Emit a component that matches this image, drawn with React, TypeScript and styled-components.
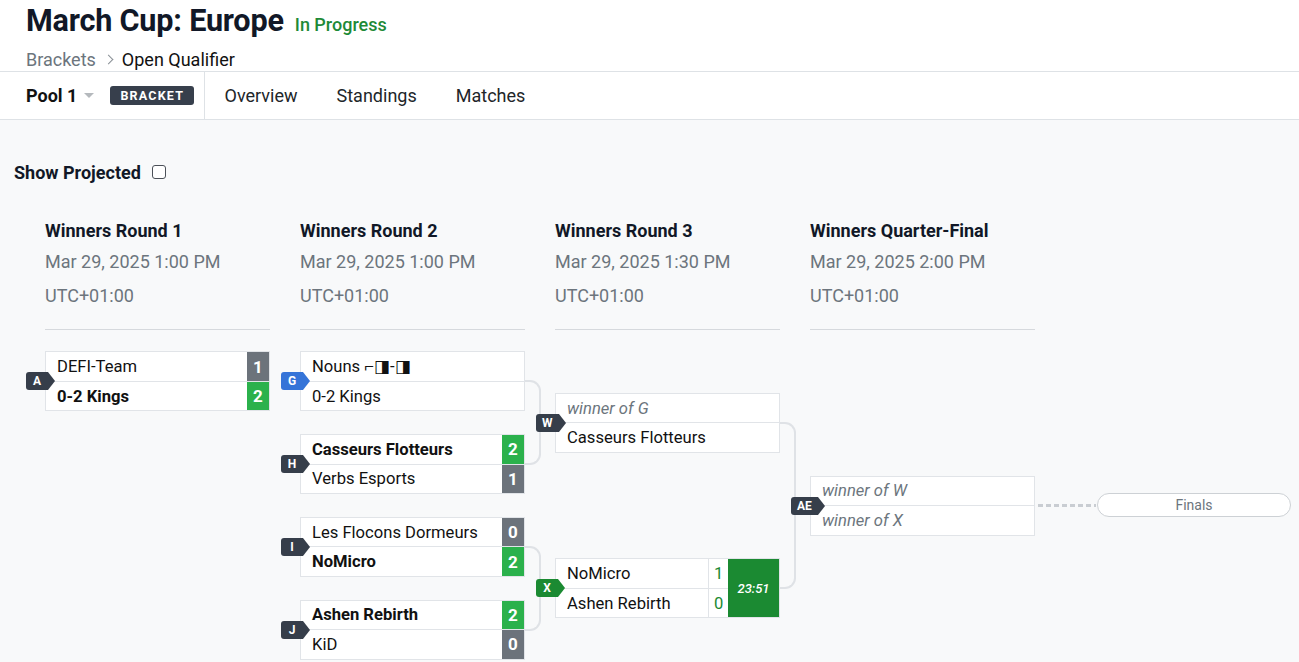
import React from 'react';
import styled, { createGlobalStyle } from 'styled-components';

const GlobalStyle = createGlobalStyle`
  html, body { margin: 0; padding: 0; }
  body {
    font-family: Roboto, "Liberation Sans", Arial, sans-serif;
    background: #f8f9fa;
    color: #111;
  }
  *, *::before, *::after { box-sizing: border-box; }
`;

type Team = { name: string; score?: number; win?: boolean; placeholder?: boolean };
type Tone = 'dark' | 'blue' | 'green';
type MatchT = {
  id: string;
  tone: Tone;
  teams: [Team, Team];
  live?: { scores: [number, number]; time: string };
};
type Round = {
  title: string;
  date: string;
  slotH: number;
  connect: boolean;
  finals?: boolean;
  slots: (MatchT | null)[];
};

const SLOT = 82.75;

const rounds: Round[] = [
  {
    title: 'Winners Round 1',
    date: 'Mar 29, 2025 1:00 PM',
    slotH: SLOT,
    connect: false,
    slots: [
      {
        id: 'A',
        tone: 'dark',
        teams: [
          { name: 'DEFI-Team', score: 1 },
          { name: '0-2 Kings', score: 2, win: true },
        ],
      },
    ],
  },
  {
    title: 'Winners Round 2',
    date: 'Mar 29, 2025 1:00 PM',
    slotH: SLOT,
    connect: true,
    slots: [
      {
        id: 'G',
        tone: 'blue',
        teams: [{ name: 'Nouns ⌐◨-◨' }, { name: '0-2 Kings' }],
      },
      {
        id: 'H',
        tone: 'dark',
        teams: [
          { name: 'Casseurs Flotteurs', score: 2, win: true },
          { name: 'Verbs Esports', score: 1 },
        ],
      },
      {
        id: 'I',
        tone: 'dark',
        teams: [
          { name: 'Les Flocons Dormeurs', score: 0 },
          { name: 'NoMicro', score: 2, win: true },
        ],
      },
      {
        id: 'J',
        tone: 'dark',
        teams: [
          { name: 'Ashen Rebirth', score: 2, win: true },
          { name: 'KiD', score: 0 },
        ],
      },
    ],
  },
  {
    title: 'Winners Round 3',
    date: 'Mar 29, 2025 1:30 PM',
    slotH: SLOT * 2,
    connect: true,
    slots: [
      {
        id: 'W',
        tone: 'dark',
        teams: [{ name: 'winner of G', placeholder: true }, { name: 'Casseurs Flotteurs' }],
      },
      {
        id: 'X',
        tone: 'green',
        teams: [{ name: 'NoMicro' }, { name: 'Ashen Rebirth' }],
        live: { scores: [1, 0], time: '23:51' },
      },
    ],
  },
  {
    title: 'Winners Quarter-Final',
    date: 'Mar 29, 2025 2:00 PM',
    slotH: SLOT * 4,
    connect: false,
    finals: true,
    slots: [
      {
        id: 'AE',
        tone: 'dark',
        teams: [
          { name: 'winner of W', placeholder: true },
          { name: 'winner of X', placeholder: true },
        ],
      },
    ],
  },
];

/* ---------- header ---------- */

const Header = styled.header`
  background: #fff;
`;

const TitleRow = styled.div`
  display: flex;
  align-items: baseline;
  padding: 3px 26px 0;
  height: 39px;
`;

const Title = styled.h1`
  margin: 0;
  font-size: 30.6px;
  line-height: 36px;
  font-weight: 700;
  color: #111827;
  letter-spacing: -0.2px;
`;

const Status = styled.span`
  margin-left: 11px;
  font-size: 18px;
  font-weight: 500;
  color: #1e8a37;
`;

const Crumbs = styled.nav`
  display: flex;
  align-items: center;
  margin-top: 8px;
  padding: 0 26px;
  height: 24px;
  font-size: 18px;
`;

const CrumbLink = styled.span`
  color: #6c757d;
`;

const CrumbSep = styled.span`
  width: 7px;
  height: 7px;
  margin: 0 10px 0 9px;
  border-top: 1.5px solid #8a9096;
  border-right: 1.5px solid #8a9096;
  transform: rotate(45deg);
`;

const CrumbCurrent = styled.span`
  color: #111;
`;

const TabBar = styled.div`
  display: flex;
  height: 49px;
  border-top: 1px solid #dee2e6;
  border-bottom: 1px solid #dee2e6;
`;

const PoolPicker = styled.div`
  display: flex;
  align-items: center;
  padding: 0 10px 0 26px;
  border-right: 1px solid #dee2e6;
`;

const PoolName = styled.span`
  font-size: 18px;
  font-weight: 700;
  color: #111;
`;

const Caret = styled.span`
  margin-left: 7px;
  width: 0;
  height: 0;
  border-left: 5px solid transparent;
  border-right: 5px solid transparent;
  border-top: 5px solid #b5b9bd;
`;

const ViewBadge = styled.span`
  margin-left: 16px;
  height: 19px;
  padding: 0 10px;
  display: inline-flex;
  align-items: center;
  border-radius: 3px;
  background: #373f4c;
  color: #fff;
  font-size: 12.5px;
  font-weight: 700;
  letter-spacing: 1.2px;
`;

const Tab = styled.span`
  display: flex;
  align-items: center;
  padding: 0 19.5px;
  font-size: 18px;
  color: #212529;
`;

/* ---------- content ---------- */

const Content = styled.main`
  padding: 40px 14px 0;
`;

const ToggleRow = styled.label`
  display: flex;
  align-items: center;
  height: 24px;
  font-size: 18px;
  font-weight: 700;
  color: #111827;
`;

const Check = styled.input`
  appearance: none;
  margin: 0 0 0 11px;
  width: 14px;
  height: 14px;
  border: 1.5px solid #4b5058;
  border-radius: 3px;
  background: #fff;
`;

const Bracket = styled.div`
  display: flex;
  margin: 35px 0 0 31px;
`;

const RoundCol = styled.section<{ $last?: boolean }>`
  display: flex;
  flex-direction: column;
  width: ${(p) => (p.$last ? 'auto' : '225px')};
  margin-right: ${(p) => (p.$last ? '0' : '30px')};
`;

const RoundHead = styled.div`
  width: 225px;
  padding-bottom: 16px;
  border-bottom: 1px solid #d6d9dd;
`;

const RoundTitle = styled.div`
  font-size: 18px;
  line-height: 24px;
  font-weight: 700;
  color: #111827;
  margin-bottom: 2px;
`;

const RoundMeta = styled.div`
  font-size: 18px;
  line-height: 34px;
  color: #6c757d;
`;

const RoundBody = styled.div`
  margin-top: 10px;
  display: flex;
  flex-direction: column;
`;

const Pair = styled.div<{ $slot: number }>`
  position: relative;
  display: flex;
  flex-direction: column;
  &::after {
    content: '';
    position: absolute;
    left: 221px;
    top: ${(p) => p.$slot / 2 - 1}px;
    height: ${(p) => p.$slot + 2}px;
    width: 20px;
    border: 2px solid #dfe2e6;
    border-left: 0;
    border-radius: 0 11px 11px 0;
    z-index: 0;
  }
`;

const Slot = styled.div<{ $h: number }>`
  height: ${(p) => p.$h}px;
  display: flex;
  align-items: center;
`;

const MatchBox = styled.div`
  position: relative;
  z-index: 1;
  flex: none;
  width: 225px;
  height: 60px;
  display: flex;
  background: #fff;
  border: 1px solid #e1e4e8;
`;

const toneColor: Record<Tone, string> = {
  dark: '#363e4a',
  blue: '#3574d8',
  green: '#1b8a32',
};

const Badge = styled.span<{ $tone: Tone }>`
  position: absolute;
  left: -20px;
  top: 50%;
  margin-top: -9px;
  height: 18px;
  min-width: 22px;
  padding: 0 6px;
  display: flex;
  align-items: center;
  justify-content: center;
  border-radius: 3px 0 0 3px;
  background: ${(p) => toneColor[p.$tone]};
  color: #fff;
  font-size: 12px;
  font-weight: 700;
  z-index: 2;
  &::after {
    content: '';
    position: absolute;
    left: 100%;
    top: 0;
    border-top: 9px solid transparent;
    border-bottom: 9px solid transparent;
    border-left: 7px solid ${(p) => toneColor[p.$tone]};
  }
`;

const Rows = styled.div`
  flex: 1;
  display: flex;
  flex-direction: column;
  min-width: 0;
`;

const TeamRow = styled.div`
  flex: 1;
  display: flex;
  align-items: stretch;
  &:first-child {
    border-bottom: 1px solid #e1e4e8;
  }
`;

const TeamName = styled.span<{ $win?: boolean; $ph?: boolean }>`
  flex: 1;
  display: flex;
  align-items: center;
  padding-left: 11px;
  font-size: 16.6px;
  white-space: nowrap;
  color: ${(p) => (p.$ph ? '#6c757d' : '#111')};
  font-weight: ${(p) => (p.$win ? 700 : 400)};
  font-style: ${(p) => (p.$ph ? 'italic' : 'normal')};
`;

const Score = styled.span<{ $win?: boolean }>`
  width: 22px;
  display: flex;
  align-items: center;
  justify-content: center;
  font-size: 17px;
  font-weight: 700;
  color: #fff;
  background: ${(p) => (p.$win ? '#2bb14c' : '#6c737b')};
`;

const LiveCol = styled.div`
  width: 20px;
  display: flex;
  flex-direction: column;
  border-left: 1px solid #e1e4e8;
`;

const LiveScore = styled.span`
  flex: 1;
  display: flex;
  align-items: center;
  padding-left: 5px;
  font-size: 16.6px;
  color: #1b8a32;
  &:first-child {
    border-bottom: 1px solid #e1e4e8;
  }
`;

const Clock = styled.span`
  width: 51px;
  display: flex;
  align-items: center;
  justify-content: center;
  background: #1b8a32;
  color: #fff;
  font-size: 13px;
  font-style: italic;
  font-weight: 500;
`;

const FinalsDash = styled.span`
  width: 58px;
  height: 3px;
  margin-left: 3px;
  background: repeating-linear-gradient(to right, #c9cdd2 0 5px, transparent 5px 8px);
`;

const FinalsPill = styled.span`
  width: 194px;
  height: 24px;
  margin-left: 1px;
  margin-top: -2px;
  display: flex;
  align-items: center;
  justify-content: center;
  border: 1px solid #cdd1d5;
  border-radius: 12px;
  background: #fff;
  font-size: 14px;
  color: #6c757d;
`;

function Match({ m }: { m: MatchT }) {
  return (
    <MatchBox>
      <Badge $tone={m.tone}>{m.id}</Badge>
      <Rows>
        {m.teams.map((t, i) => (
          <TeamRow key={i}>
            <TeamName $win={t.win} $ph={t.placeholder}>
              {t.name}
            </TeamName>
            {t.score !== undefined && <Score $win={t.win}>{t.score}</Score>}
          </TeamRow>
        ))}
      </Rows>
      {m.live && (
        <>
          <LiveCol>
            <LiveScore>{m.live.scores[0]}</LiveScore>
            <LiveScore>{m.live.scores[1]}</LiveScore>
          </LiveCol>
          <Clock>{m.live.time}</Clock>
        </>
      )}
    </MatchBox>
  );
}

function RoundView({ r, last }: { r: Round; last: boolean }) {
  const slot = (m: MatchT | null, i: number) => (
    <Slot key={i} $h={r.slotH}>
      {m && <Match m={m} />}
      {m && r.finals && (
        <>
          <FinalsDash />
          <FinalsPill>Finals</FinalsPill>
        </>
      )}
    </Slot>
  );
  let body: React.ReactNode;
  if (r.connect) {
    const pairs: (MatchT | null)[][] = [];
    for (let i = 0; i < r.slots.length; i += 2) pairs.push(r.slots.slice(i, i + 2));
    body = pairs.map((p, i) => (
      <Pair key={i} $slot={r.slotH}>
        {p.map((m, j) => slot(m, j))}
      </Pair>
    ));
  } else {
    body = r.slots.map(slot);
  }
  return (
    <RoundCol $last={last}>
      <RoundHead>
        <RoundTitle>{r.title}</RoundTitle>
        <RoundMeta>{r.date}</RoundMeta>
        <RoundMeta>UTC+01:00</RoundMeta>
      </RoundHead>
      <RoundBody>{body}</RoundBody>
    </RoundCol>
  );
}

export default function App() {
  return (
    <>
      <GlobalStyle />
      <Header>
        <TitleRow>
          <Title>March Cup: Europe</Title>
          <Status>In Progress</Status>
        </TitleRow>
        <Crumbs>
          <CrumbLink>Brackets</CrumbLink>
          <CrumbSep />
          <CrumbCurrent>Open Qualifier</CrumbCurrent>
        </Crumbs>
        <TabBar>
          <PoolPicker>
            <PoolName>Pool 1</PoolName>
            <Caret />
            <ViewBadge>BRACKET</ViewBadge>
          </PoolPicker>
          <Tab>Overview</Tab>
          <Tab>Standings</Tab>
          <Tab>Matches</Tab>
        </TabBar>
      </Header>
      <Content>
        <ToggleRow>
          Show Projected
          <Check type="checkbox" />
        </ToggleRow>
        <Bracket>
          {rounds.map((r, i) => (
            <RoundView key={r.title} r={r} last={i === rounds.length - 1} />
          ))}
        </Bracket>
      </Content>
    </>
  );
}
